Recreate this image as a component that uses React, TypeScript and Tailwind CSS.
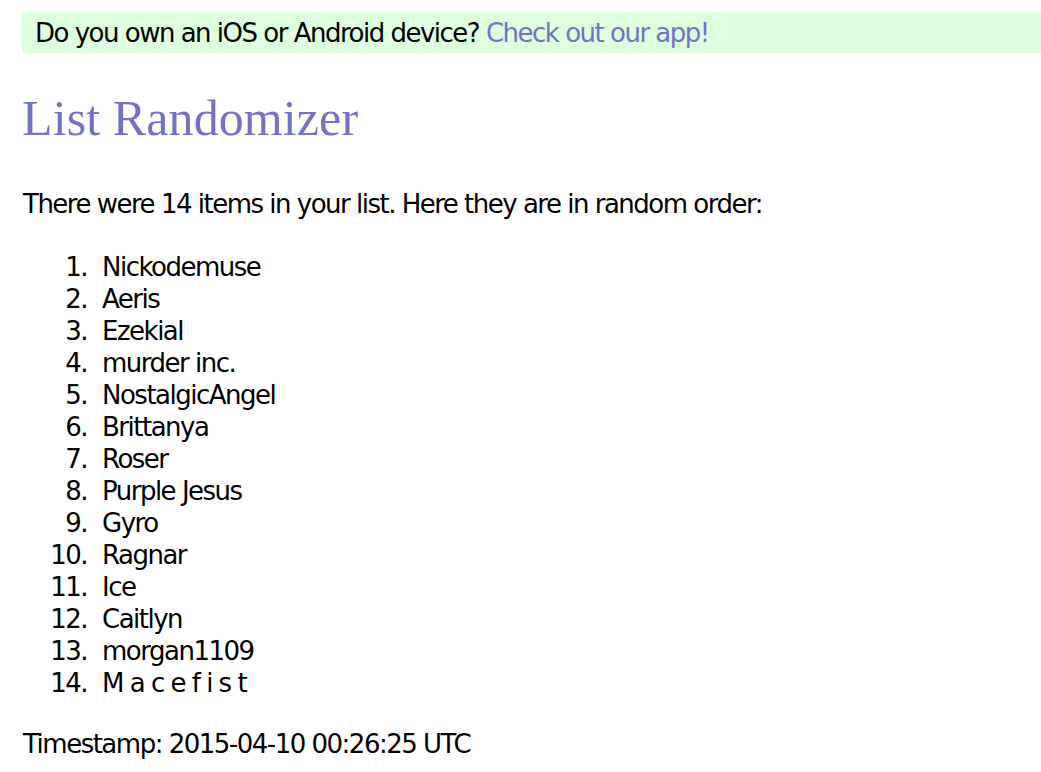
import React from "react";

const items = [
  "Nickodemuse",
  "Aeris",
  "Ezekial",
  "murder inc.",
  "NostalgicAngel",
  "Brittanya",
  "Roser",
  "Purple Jesus",
  "Gyro",
  "Ragnar",
  "Ice",
  "Caitlyn",
  "morgan1109",
  "M a c e f i s t",
];

export default function App() {
  return (
    <div className="min-h-[772px] bg-white pl-[22px] font-['DejaVu_Sans',sans-serif] text-[26px] leading-[32px] tracking-[-1.5px] text-black">
      <div className="mt-[12px] bg-[#ddffdd] pl-[13px] pt-[5px] pb-[4px]">
        Do you own an iOS or Android device?{" "}
        <a href="#" className="text-[#7373c6]">
          Check out our app!
        </a>
      </div>

      <h1 className="mt-[37px] font-['Liberation_Serif',serif] text-[50px] leading-[56px] tracking-[0.1px] font-normal text-[#7373c6]">
        List Randomizer
      </h1>

      <p className="mt-[42px] pl-px">
        There were {items.length} items in your list. Here they are in random
        order:
      </p>

      <ol className="mt-[31px]">
        {items.map((item, i) => (
          <li key={i} className="flex">
            <span className="w-[65px] text-right">{i + 1}.</span>
            <span className="ml-[15px] whitespace-pre">{item}</span>
          </li>
        ))}
      </ol>

      <p className="mt-[29px] pl-px">Timestamp: 2015-04-10 00:26:25 UTC</p>
    </div>
  );
}
